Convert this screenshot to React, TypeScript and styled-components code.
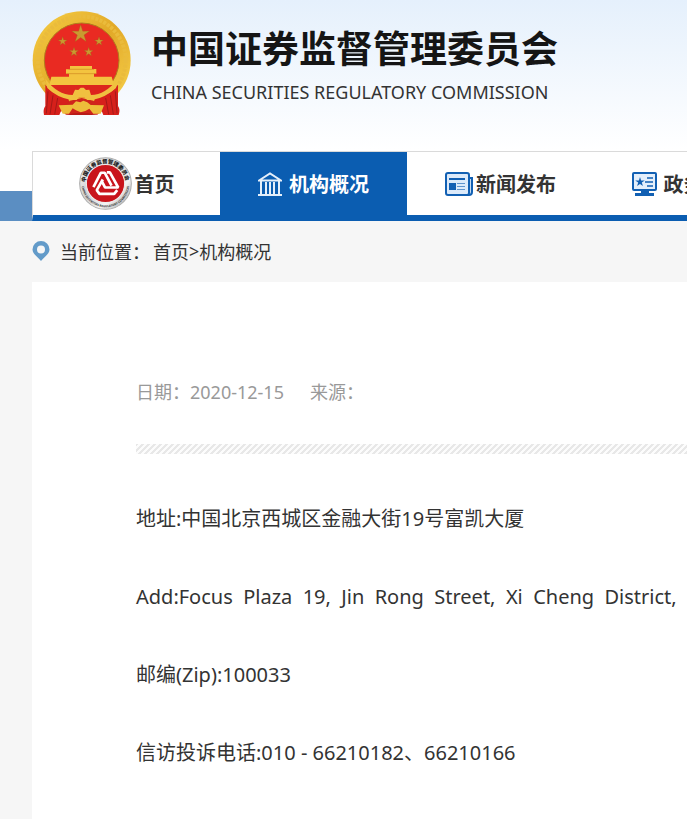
import React from "react";
import styled, { createGlobalStyle } from "styled-components";

const GlobalStyle = createGlobalStyle`
  * { box-sizing: border-box; }
  body {
    margin: 0;
    min-height: 100vh;
    overflow-x: hidden;
    background: #f6f6f6;
    color: #333;
    font-family: "Noto Sans", "Noto Sans CJK SC", sans-serif;
  }
`;

const Header = styled.header`
  background: linear-gradient(#e5f0fc, #fff 150px);
`;

const Brand = styled.a`
  display: flex;
  align-items: flex-start;
  gap: 20px;
  padding: 11px 0 0 32px;
  height: 151px;
  color: #151515;
  text-decoration: none;
  white-space: nowrap;
`;

const BrandText = styled.div`
  padding-top: 11px;
`;

const BrandName = styled.h1`
  margin: 0;
  font: 700 37px/50px "Noto Sans CJK SC", sans-serif;
`;

const BrandEnglish = styled.p`
  margin: 8px 0 0;
  font-size: 18px;
  line-height: 25px;
  color: #333;
`;

const NavRow = styled.div`
  display: grid;
  grid-template-columns: 32px minmax(0, 1fr);
`;

const Strip = styled.div`
  align-self: end;
  height: 30px;
  background: #5b8ec2;
`;

const Nav = styled.nav`
  display: flex;
  overflow: hidden;
  height: 70px;
  background: #fff;
  border: solid #dadada;
  border-width: 1px 0 0 1px;
  border-bottom: 6px solid #0b5db1;
`;

const NavItem = styled.a<{ $active?: boolean; $gap?: number }>`
  flex: 0 0 187px;
  display: flex;
  align-items: center;
  justify-content: center;
  gap: ${(p) => p.$gap ?? 3}px;
  background: ${(p) => (p.$active ? "#0b5db1" : "#fff")};
  color: ${(p) => (p.$active ? "#fff" : "#333")};
  font: 700 20px/30px "Noto Sans CJK SC", sans-serif;
  text-decoration: none;
  white-space: nowrap;

  svg { flex: none; }
`;

const Breadcrumb = styled.nav`
  display: flex;
  align-items: center;
  height: 61px;
  padding: 0 0 2px 32px;
  font-size: 18px;
  white-space: nowrap;
`;

const CrumbLabel = styled.span`
  margin: 0 3px 0 10px;
`;

const CrumbLink = styled.a`
  color: inherit;
  text-decoration: none;
`;

const Article = styled.main`
  min-height: calc(100vh - 282px);
  margin-left: 32px;
  padding: 95px 0 0 104px;
  background: #fff;
  overflow: hidden;
`;

const Meta = styled.div`
  display: flex;
  gap: 26px;
  color: #999;
  font-size: 18px;
  line-height: 30px;
  white-space: nowrap;
`;

const Hatch = styled.hr`
  height: 10px;
  margin: 37px 0 45px;
  border: 0;
  background: linear-gradient(135deg, #e8e8e8 25%, #fcfcfc 25% 50%, #e8e8e8 50% 75%, #fcfcfc 75%) 0 0 / 6px 6px;
`;

const Line = styled.p`
  margin: 0 0 38px;
  font-size: 20px;
  line-height: 40px;
  white-space: pre;
`;

const star = (cx: number, cy: number, r: number) =>
  Array.from({ length: 10 }, (_, i) => {
    const a = (Math.PI * i) / 5 - Math.PI / 2;
    const d = i % 2 ? r * 0.38 : r;
    return `${cx + d * Math.cos(a)},${cy + d * Math.sin(a)}`;
  }).join(" ");

const Emblem = () => (
  <svg width="99" height="104" viewBox="36 33 297 312" aria-hidden="true">
    <defs>
      <linearGradient id="gold" x1="0" y1="0" x2="1" y2="1">
        <stop offset="0" stopColor="#f6cf45" />
        <stop offset=".5" stopColor="#e2a928" />
        <stop offset="1" stopColor="#f8d44e" />
      </linearGradient>
    </defs>
    <circle cx="185" cy="181" r="147" fill="url(#gold)" />
    <circle cx="185" cy="181" r="132" fill="none" stroke="#eabb3c" strokeWidth="12" strokeDasharray="9 4" />
    <circle cx="185" cy="181" r="112" fill="#e92a22" stroke="#b07d1d" strokeWidth="3" />
    <g fill="#c99a30" stroke="#a5621c" strokeWidth="1">
      <polygon points={star(182, 102, 28)} />
      <polygon points={star(128, 124, 14)} />
      <polygon points={star(237, 124, 14)} />
      <polygon points={star(162, 156, 14)} />
      <polygon points={star(206, 156, 14)} />
    </g>
    <path d="M150 198H216V207H229V221H222V230H275L282 255H88L94 230H147V221H138V208H150Z" fill="#f3c33f" />
    <path d="M139 221H229M146 208H222" stroke="#cf8720" strokeWidth="2" />
    <path d="M88 255H282Q248 293 185 294Q122 293 88 255Z" fill="#dc251d" />
    <path d="M76 254Q100 286 145 294L150 318L122 335L118 345H72Q68 329 76 318ZM294 254Q270 286 225 294L218 318L246 335L250 345H296Q302 329 294 318Z" fill="#d6201b" />
    <path d="M84 274L79 340M99 286L90 343M113 294L104 343M286 274L291 340M271 286L280 343M257 294L266 343" stroke="#a31a18" strokeWidth="3" />
    <path d="M118 326L150 302L185 294L220 302L252 326L232 344H138Z" fill="#cf241b" />
    <path d="M76 236Q112 284 158 285L165 269L175 270L182 263L191 263L198 270L208 269L213 285Q256 284 294 236L288 264Q258 292 217 300H202L194 293H176L170 300H153Q110 292 82 264Z" fill="#f0c040" />
    <path d="M116 316L158 314L168 304L181 307L190 302L202 307L212 315L252 316L242 341H220L208 326L196 333L182 337L168 331L158 325L147 341H128Z" fill="#edbd3a" />
    <path d="M138 345Q182 331 228 345Z" fill="#b81b18" />
  </svg>
);

const Seal = () => (
  <svg width="53" height="53" viewBox="-79 -79 158 158" aria-hidden="true">
    <defs>
      <linearGradient id="steel" x1="0" y1="0" x2="1" y2="1">
        <stop offset="0" stopColor="#f8f8f8" />
        <stop offset=".45" stopColor="#d2d2d2" />
        <stop offset=".7" stopColor="#f4f4f4" />
        <stop offset="1" stopColor="#909090" />
      </linearGradient>
      <path id="arcTop" d="M-60 0A60 60 0 0 1 60 0" />
      <path id="arcBottom" d="M-71 0A71 71 0 0 0 71 0" />
    </defs>
    <circle r="77" fill="url(#steel)" stroke="#aaa" strokeWidth="3" />
    <circle r="57" fill="#c9141c" stroke="#eee" strokeWidth="3" />
    <text fontFamily="Noto Sans CJK SC" fontWeight="900" fontSize="16" fill="#222">
      <textPath href="#arcTop" startOffset="4">中国证券监督管理委员会</textPath>
    </text>
    <text fontFamily="Noto Sans" fontWeight="700" fontSize="9" fill="#333">
      <textPath href="#arcBottom" startOffset="8">CHINA SECURITIES REGULATORY COMMISSION</textPath>
    </text>
    <g fill="none" stroke="#fff" strokeWidth="8" strokeLinejoin="bevel">
      <path d="M-36 11L-14 -32H-2L18 6" />
      <path d="M4 -33H13L38 12H-1L-10 -5" />
      <path d="M-8 -12L-26 20L-18 31H26L35 20" />
    </g>
  </svg>
);

const InstitutionIcon = () => (
  <svg width="24" height="24" viewBox="0 0 24 24" fill="none" stroke="#e5effa" strokeWidth="2" aria-hidden="true">
    <path d="M1 8.5L12 1.5L23 8.5ZM3 9V22M21 9V22M8 10V22M12 10V22M16 10V22M0 23H24" />
  </svg>
);

const NewsIcon = () => (
  <svg width="28" height="24" viewBox="0 0 28 24" aria-hidden="true">
    <path d="M24 6H27V20Q27 23 24 23H4" fill="#c6dcf2" stroke="#1260b3" strokeWidth="2" />
    <rect x="1" y="1" width="23" height="22" rx="2" fill="#dceafa" stroke="#1260b3" strokeWidth="2" />
    <path d="M4 7H20" stroke="#1260b3" strokeWidth="2" />
    <rect x="4" y="11" width="7" height="7" fill="#1260b3" />
    <path d="M12 11.5H20M12 14.5H20M12 17.5H20" stroke="#5f94cd" strokeWidth="1" />
  </svg>
);

const AffairsIcon = () => (
  <svg width="25" height="24" viewBox="0 0 25 24" aria-hidden="true">
    <rect x="1" y="1" width="23" height="17" rx="1" fill="#e4effb" stroke="#1260b3" strokeWidth="2" />
    <polygon points={star(8, 10, 5)} fill="#1260b3" />
    <path d="M15 6H21M13 10H21M15 14H21" stroke="#1260b3" strokeWidth="1.5" />
    <path d="M9 18H17V21H22V24H3V21H9Z" fill="#1260b3" />
  </svg>
);

const PinIcon = () => (
  <svg width="18" height="20" viewBox="0 0 18 20" aria-hidden="true">
    <path fillRule="evenodd" fill="#639bc9" d="M9 0A8.5 8.5 0 0 1 17.5 8.5C17.5 13 12 16 9 20C6 16 .5 13 .5 8.5A8.5 8.5 0 0 1 9 0ZM9 4.5A4 4 0 1 0 9 12.5A4 4 0 1 0 9 4.5Z" />
  </svg>
);

const LINES = [
  "地址:中国北京西城区金融大街19号富凯大厦",
  "Add:Focus  Plaza  19,  Jin  Rong  Street,  Xi  Cheng  District,",
  "邮编(Zip):100033",
  "信访投诉电话:010 - 66210182、66210166",
];

export default function App() {
  return (
    <>
      <GlobalStyle />
      <Header>
        <Brand href="#">
          <Emblem />
          <BrandText>
            <BrandName>中国证券监督管理委员会</BrandName>
            <BrandEnglish>CHINA SECURITIES REGULATORY COMMISSION</BrandEnglish>
          </BrandText>
        </Brand>
        <NavRow>
          <Strip />
          <Nav>
            <NavItem href="#"><Seal />首页</NavItem>
            <NavItem href="#" $active $gap={7}><InstitutionIcon />机构概况</NavItem>
            <NavItem href="#" $gap={3}><NewsIcon />新闻发布</NavItem>
            <NavItem href="#" $gap={7}><AffairsIcon />政务信息</NavItem>
          </Nav>
        </NavRow>
      </Header>
      <Breadcrumb>
        <PinIcon />
        <CrumbLabel>当前位置：</CrumbLabel>
        <CrumbLink href="#">首页</CrumbLink>
        <span>&gt;</span>
        <CrumbLink href="#">机构概况</CrumbLink>
      </Breadcrumb>
      <Article>
        <Meta>
          <span>日期：2020-12-15</span>
          <span>来源：</span>
        </Meta>
        <Hatch />
        {LINES.map((line) => (
          <Line key={line}>{line}</Line>
        ))}
      </Article>
    </>
  );
}
